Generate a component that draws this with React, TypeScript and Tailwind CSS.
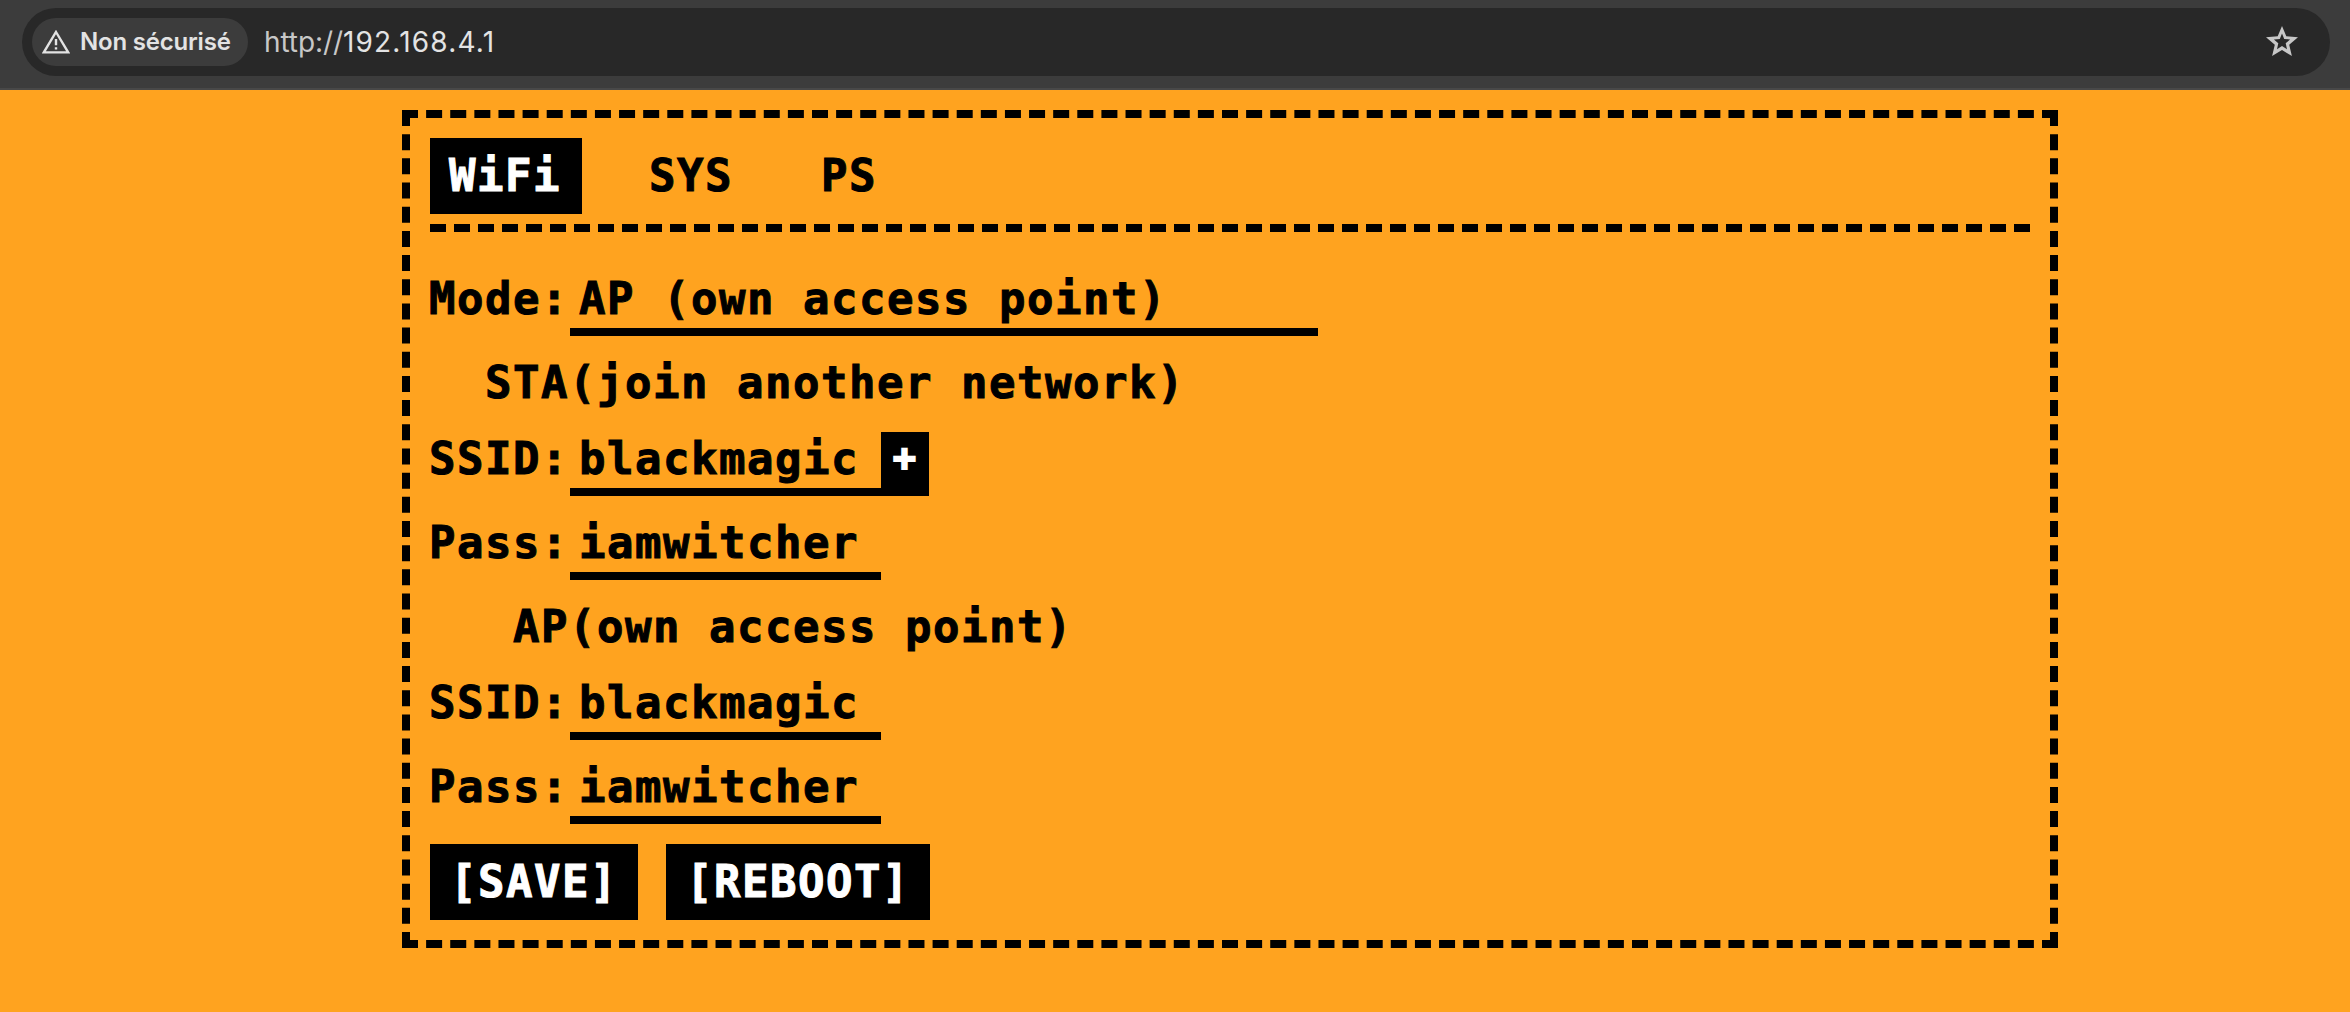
import React from "react";

const NBSP = "\u00a0";

function WarningIcon() {
  return (
    <svg className="h-6 w-7 shrink-0" viewBox="0 0 28 24" fill="none">
      <path d="M14 2 L26.2 22.4 H1.8 Z" stroke="#e3e3e3" strokeWidth="2.4" strokeLinejoin="miter" />
      <path d="M14 9 V15.2 M14 17.2 V19.6" stroke="#e3e3e3" strokeWidth="2.4" />
    </svg>
  );
}

function StarIcon() {
  return (
    <svg className="h-[30px] w-8" viewBox="0 0 32 30" fill="none">
      <path
        fill="#c7c7c7"
        fillRule="evenodd"
        d="M16 0 L20.3 10.3 L32 11.2 L23.2 18.7 L25.9 30 L16 24 L6.1 30 L8.8 18.7 L0 11.2 L11.7 10.3 Z M16 7.4 L13.8 12.9 L7.9 13.4 L12.3 17.3 L11 23.2 L16 20.1 L21 23.2 L19.7 17.3 L24.1 13.4 L18.2 12.9 Z"
      />
    </svg>
  );
}

function AddressBar() {
  return (
    <header className="h-[90px] border-b-2 border-[#484848] bg-[#3c3c3c] pt-2 pr-5 pl-[22px] font-['Inter',sans-serif]">
      <div className="flex h-[68px] items-center rounded-full bg-[#282828] pr-8 pl-[10px]">
        <div className="flex h-12 w-[216px] items-center rounded-full bg-[#3c3c3c] pl-[10px] text-[#e3e3e3]">
          <WarningIcon />
          <span className="ml-[10px] text-[24px] font-semibold tracking-[-0.2px] whitespace-nowrap">Non sécurisé</span>
        </div>
        <div className="ml-4 text-[28px] whitespace-nowrap text-[#e3e3e3]">
          <span className="tracking-[-0.1px] text-[#c7c7c7]">http://</span>
          <span className="tracking-[1.2px]">192.168.4.1</span>
        </div>
        <div className="mt-[-2px] ml-auto">
          <StarIcon />
        </div>
      </div>
    </header>
  );
}

function Tab({ label, active = false }: { label: string; active?: boolean }) {
  return (
    <button
      className={`block h-[76px] pr-[21px] pl-[19px] leading-[74px] ${active ? "bg-black text-white" : "text-black"}`}
    >
      {label}
    </button>
  );
}

function Field({ label, value, wide = false, action }: { label: string; value: string; wide?: boolean; action?: string }) {
  return (
    <div className="flex h-16 leading-[54px]">
      <span className="w-[140px] shrink-0 -indent-px">{label}</span>
      <div className={`border-b-8 border-black pl-[9px] ${wide ? "w-[748px]" : "w-[311px]"}`}>{value}</div>
      {action && (
        <button className="block w-12 bg-black pb-3 pl-3 text-left text-[38px] leading-[44px] text-white [-webkit-text-stroke:2px_currentColor]">
          {action}
        </button>
      )}
    </div>
  );
}

function Heading({ indent, children }: { indent: number; children: React.ReactNode }) {
  return (
    <h2 className="h-16 leading-[54px] -indent-px">
      {NBSP.repeat(indent)}
      {children}
    </h2>
  );
}

function ActionButton({ children }: { children: React.ReactNode }) {
  return <button className="block h-[76px] bg-black px-5 leading-[74px] text-white">{children}</button>;
}

export default function App() {
  return (
    <div className="h-[1012px] overflow-hidden bg-[#ffa31f]">
      <AddressBar />
      <main className="mt-5 ml-[402px] h-[838px] w-[1656px] border-8 border-dashed border-black p-5 font-['DejaVu_Sans_Mono',monospace] text-[44px] font-bold tracking-[1.51px] whitespace-nowrap text-black [-webkit-text-stroke:1px_currentColor]">
        <nav className="flex gap-12 border-b-8 border-dashed border-black pb-[10px]">
          <Tab label="WiFi" active />
          <Tab label="SYS" />
          <Tab label="PS" />
        </nav>
        <div className="mt-10 flex flex-col gap-5">
          <Field label="Mode:" value="AP (own access point)" wide />
          <section className="flex flex-col gap-3">
            <Heading indent={2}>STA(join another network)</Heading>
            <Field label="SSID:" value="blackmagic" action="+" />
          </section>
          <Field label="Pass:" value="iamwitcher" />
          <section className="flex flex-col gap-3">
            <Heading indent={3}>AP(own access point)</Heading>
            <Field label="SSID:" value="blackmagic" />
          </section>
          <Field label="Pass:" value="iamwitcher" />
          <div className="flex gap-7">
            <ActionButton>[SAVE]</ActionButton>
            <ActionButton>[REBOOT]</ActionButton>
          </div>
        </div>
      </main>
    </div>
  );
}
